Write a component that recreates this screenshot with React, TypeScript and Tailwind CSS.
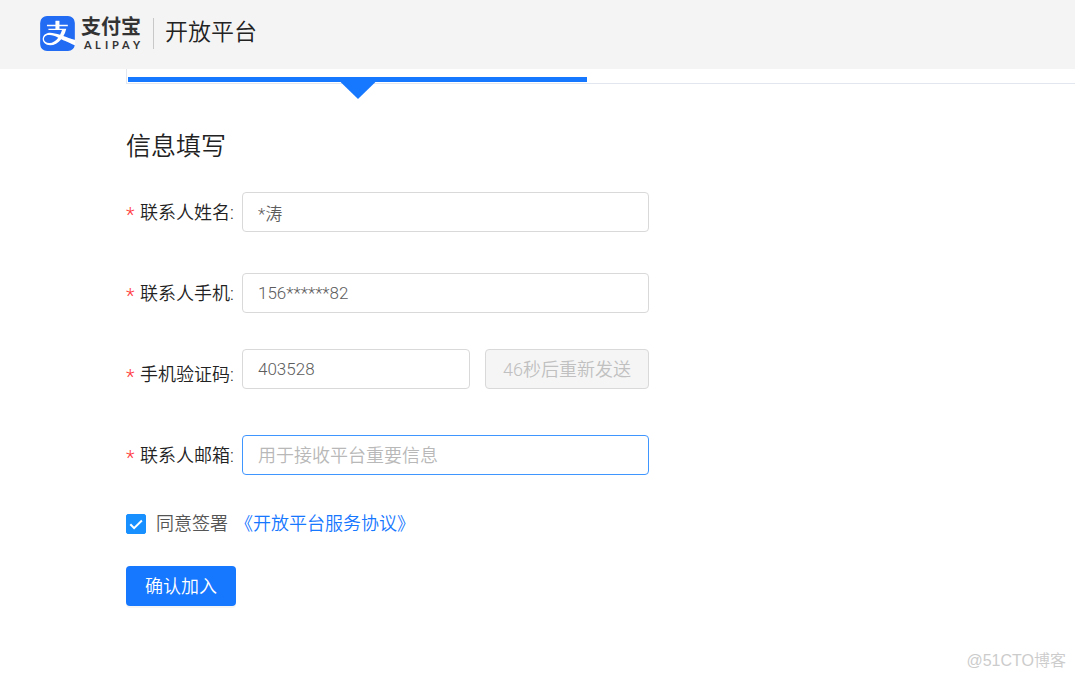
import React, { useState } from 'react';
import { SiAlipay } from 'react-icons/si';

interface FieldProps {
  id: string;
  label: string;
  className?: string;
  children: React.ReactNode;
}

const inputClass = 'h-10 min-w-0 flex-1 rounded-[4px] border bg-white px-[15px] text-[#5c5c5c] outline-none placeholder:text-[#b8b8b8]';

const Field: React.FC<FieldProps> = ({ id, label, className = '', children }) => (
  <div className={`flex items-center ${className}`}>
    <label htmlFor={id} className="flex w-[116px] shrink-0 items-center pt-px text-[#222]">
      <span className="w-[14px] pt-1 text-[20px] text-[#ff3b3e]">*</span>
      <span>{label}:</span>
    </label>
    {children}
  </div>
);

const Header = () => (
  <header className="flex h-[69px] items-center bg-[#f4f4f4] px-10 pb-[2px]">
    <SiAlipay className="h-[35px] w-[35px] rounded-[7px] bg-white text-[#226bf3]" />
    <div className="ml-[6px] flex w-[63px] flex-col text-[#333]">
      <span className="text-[20px] leading-[23px] font-bold">支付宝</span>
      <svg viewBox="0 0 63 12" className="h-3 w-[63px] overflow-visible" fill="#333">
        <text x="3 14 24 31 41 52" y="10" fontSize="11" fontWeight="700" fontFamily="Lato, sans-serif">ALIPAY</text>
      </svg>
    </div>
    <span className="ml-[9px] h-[31px] w-px bg-[#c8c8c8]" />
    <span className="ml-[11px] pb-[2px] text-[23px] leading-8 text-[#222]">开放平台</span>
  </header>
);

const StepBar = () => (
  <div className="ml-[126px] flex h-[15px] items-end border-b border-l border-[#e2e6ee] pb-px pl-px">
    <div className="relative h-[5px] w-[459px] bg-[#1677ff]">
      <svg viewBox="0 0 35 17" className="absolute left-1/2 top-full h-[17px] w-[35px] -translate-x-1/2" fill="#1677ff">
        <path d="M0 0h35L17.5 17z" />
      </svg>
    </div>
  </div>
);

export default function App() {
  const [agreed, setAgreed] = useState(true);

  return (
    <div className="relative min-h-screen bg-white font-['Roboto','Noto_Sans_CJK_SC',sans-serif] text-[18px] leading-6 font-[350]">
      <Header />
      <StepBar />

      <form className="ml-[126px] max-w-[523px] pt-[45px]" onSubmit={(e) => e.preventDefault()}>
        <h1 className="text-[25px] leading-9 text-[#222]">信息填写</h1>

        <Field id="name" label="联系人姓名" className="mt-[27px]">
          <input id="name" type="text" defaultValue="*涛" className={`${inputClass} border-[#d9d9d9] text-[17px]`} />
        </Field>
        <Field id="phone" label="联系人手机" className="mt-[41px]">
          <input id="phone" type="text" defaultValue="156******82" className={`${inputClass} border-[#d9d9d9] text-[17px]`} />
        </Field>
        <Field id="code" label="手机验证码" className="mt-9">
          <div className="flex min-w-0 flex-1 gap-[15px] pb-[10px]">
            <input id="code" type="text" defaultValue="403528" className={`${inputClass} border-[#d9d9d9] text-[17px]`} />
            <button type="button" disabled className="h-10 w-[164px] rounded-[4px] border border-[#d9d9d9] bg-[#f5f5f5] pt-[2px] text-[#c0c0c0]">46秒后重新发送</button>
          </div>
        </Field>
        <Field id="email" label="联系人邮箱" className="mt-9">
          <input id="email" type="email" placeholder="用于接收平台重要信息" className={`${inputClass} border-[#4096ff]`} />
        </Field>

        <div className="mt-[37px] flex items-center">
          <label htmlFor="agree" className="flex items-center gap-[10px] text-[#555]">
            <span className="grid h-5 w-5">
              <input
                id="agree"
                type="checkbox"
                checked={agreed}
                onChange={(e) => setAgreed(e.target.checked)}
                className="col-start-1 row-start-1 h-5 w-5 appearance-none rounded-[2px] border border-[#d9d9d9] checked:border-[#1890ff] checked:bg-[#1890ff]"
              />
              {agreed && (
                <svg viewBox="0 0 20 20" className="pointer-events-none col-start-1 row-start-1 h-5 w-5" fill="none" stroke="#fff" strokeWidth="2">
                  <path d="M4.3 10.3l3.8 3.9 7.8-7.7" />
                </svg>
              )}
            </span>
            同意签署
          </label>
          <a href="#agreement" className="ml-[7px] text-[#1677ff]">《开放平台服务协议》</a>
        </div>

        <button type="submit" className="mt-[30px] h-10 rounded-[4px] bg-[#1677ff] px-[19px] pt-[2px] text-white shadow-[0_2px_0_rgba(0,0,0,0.04)]">确认加入</button>
      </form>

      <span className="absolute right-[9px] bottom-[6px] font-['Liberation_Sans','Noto_Sans_CJK_SC',sans-serif] text-[16px] text-[#ccc]">@51CTO博客</span>
    </div>
  );
}
